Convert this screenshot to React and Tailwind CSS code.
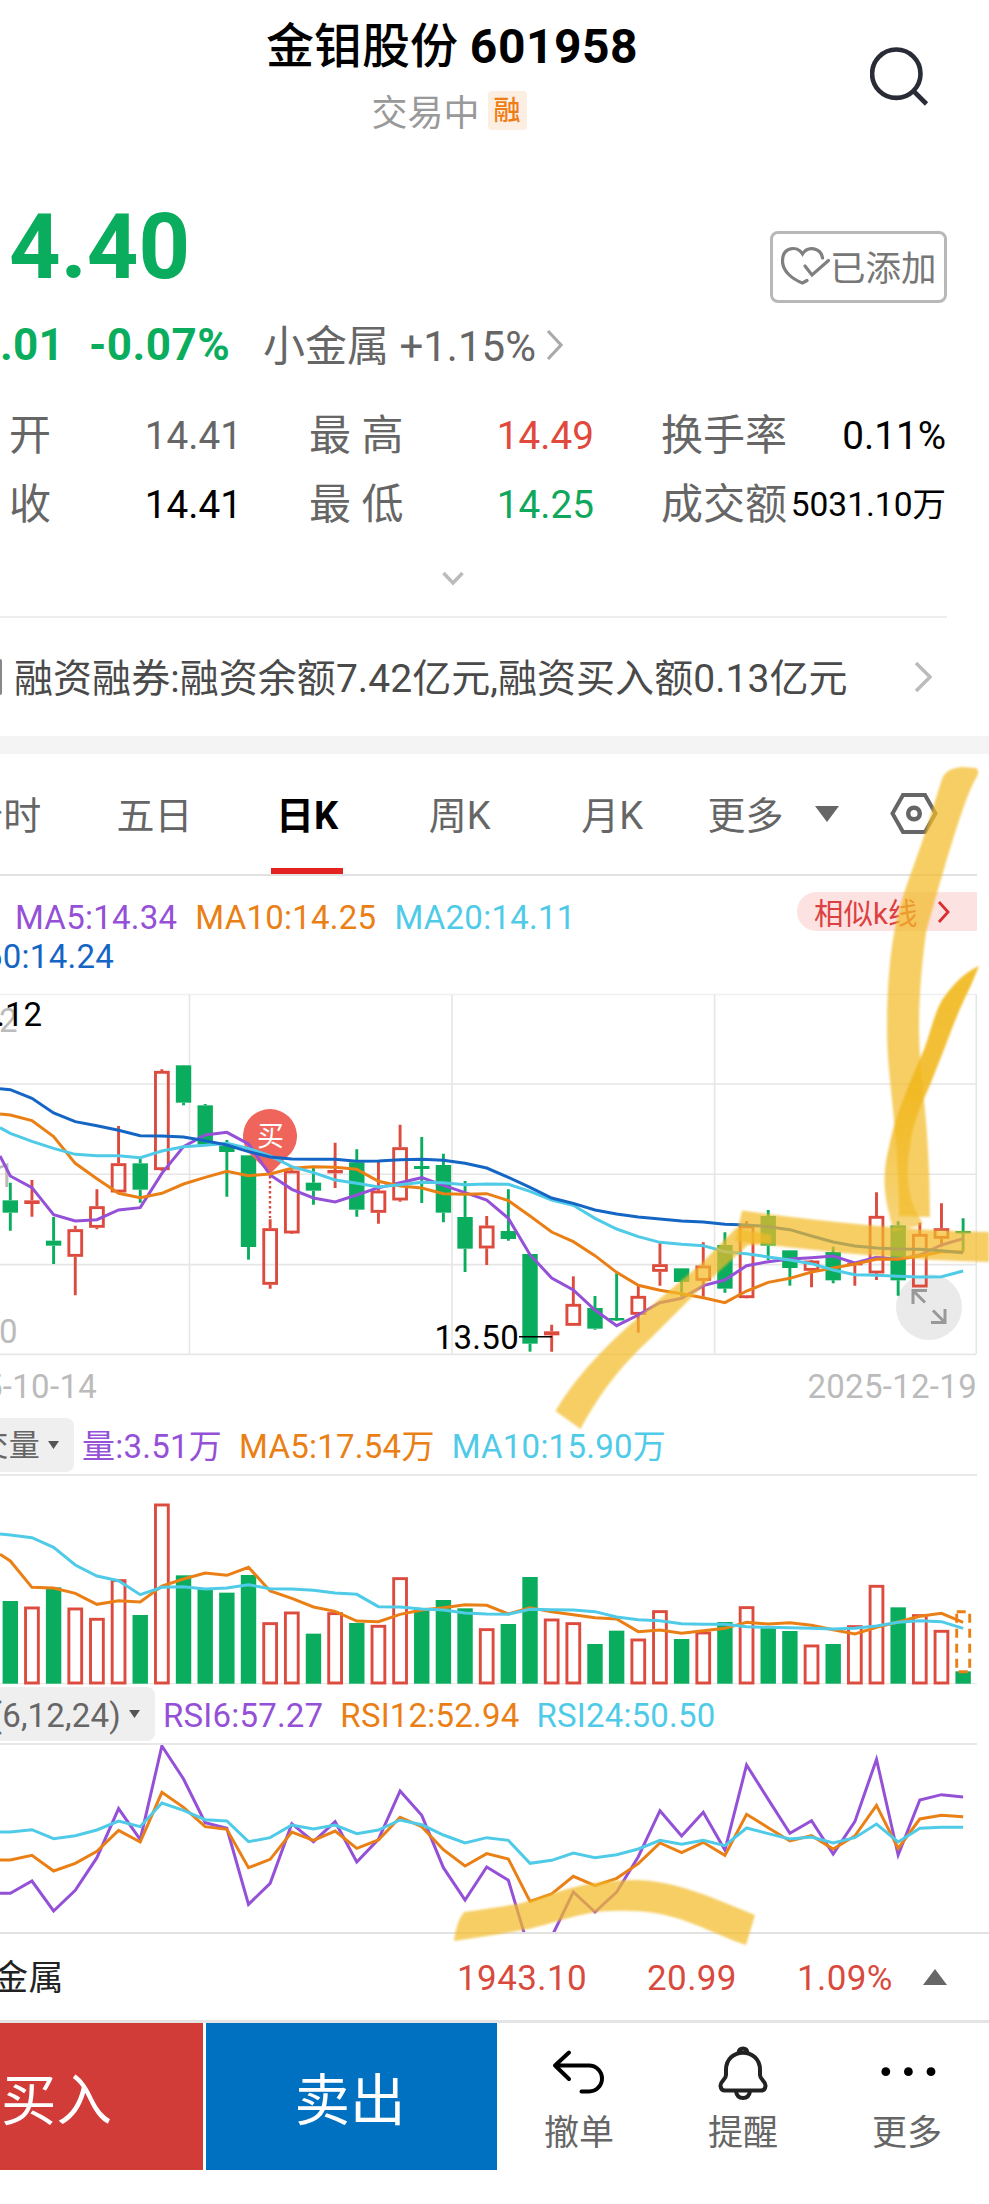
const RED = "#dd4b3e";
const GREEN = "#0aad5d";
const PURPLE = "#9550d8";
const ORANGE = "#ea8015";
const CYAN = "#4fcbe8";
const BLUE = "#1566c4";

// [up, high, bodyTop, bodyBottom, low], in thirds of a pixel below the chart origin
const candles = [
  [0, 608, 661, 698, 752], [1, 600, 661, 672, 710], [0, 711, 782, 797, 852],
  [1, 737, 748, 830, 946], [1, 628, 679, 743, 748], [1, 438, 550, 637, 640],
  [0, 535, 550, 629, 668], [1, 268, 273, 570, 572], [0, 255, 256, 368, 376],
  [0, 372, 376, 494, 494], [0, 480, 497, 516, 650], [0, 526, 526, 801, 839],
  [1, 718, 745, 914, 926], [1, 570, 572, 760, 762], [0, 562, 608, 632, 674],
  [1, 488, 570, 580, 624], [0, 508, 547, 689, 710], [1, 545, 632, 698, 731],
  [1, 434, 502, 661, 665], [0, 471, 558, 567, 669], [0, 521, 555, 698, 727],
  [0, 603, 711, 806, 876], [1, 708, 737, 805, 855], [0, 628, 753, 777, 782],
  [0, 822, 822, 1091, 1115], [1, 1034, 1054, 1066, 1115], [1, 889, 972, 1037, 1037],
  [0, 948, 984, 1046, 1049], [0, 880, 1014, 1020, 1022], [1, 918, 948, 1004, 1058],
  [1, 787, 853, 875, 917], [0, 865, 865, 906, 950], [1, 787, 857, 902, 950],
  [0, 757, 795, 926, 938], [1, 723, 737, 954, 955], [0, 690, 708, 797, 840],
  [0, 811, 811, 864, 917], [1, 840, 842, 872, 922], [0, 800, 816, 901, 910],
  [1, 850, 848, 856, 917], [1, 637, 708, 880, 900], [0, 724, 736, 901, 947],
  [1, 728, 762, 922, 922], [1, 670, 745, 776, 800], [0, 715, 753, 760, 815],
];

const volumes = [
  573, 590, 532, 593, 624, 508, 615, 281, 496, 537, 548, 495, 637, 605, 671,
  607, 639, 645, 502, 597, 570, 595, 655, 642, 501, 626, 637, 702, 662, 686,
  601, 687, 665, 636, 589, 650, 663, 704, 702, 646, 525, 592, 613, 660, 784,
];

// first value is where the line enters the left edge
const ma5 = [528, 588, 623, 704, 723, 719, 690, 683, 580, 500, 465, 457, 492, 585, 628, 654, 666, 645, 623, 608, 593, 616, 638, 660, 715, 824, 894, 930, 990, 1037, 1005, 968, 955, 917, 900, 857, 845, 837, 833, 828, 849, 832, 838, 825, 795, 776];
const ma10 = [402, 405, 422, 470, 550, 596, 640, 653, 640, 612, 592, 574, 587, 582, 565, 560, 562, 568, 604, 618, 624, 641, 643, 641, 662, 708, 756, 785, 827, 877, 916, 931, 941, 953, 968, 933, 907, 895, 876, 864, 852, 838, 838, 828, 815, 815];
const ma20 = [443, 460, 484, 505, 523, 527, 527, 533, 513, 500, 496, 490, 505, 528, 560, 578, 600, 610, 621, 614, 607, 608, 614, 612, 613, 634, 660, 676, 715, 747, 770, 787, 793, 797, 815, 821, 831, 840, 851, 870, 884, 886, 889, 891, 890, 873];
const ma60 = [326, 329, 355, 399, 425, 437, 451, 467, 468, 471, 482, 495, 515, 531, 537, 538, 538, 544, 543, 539, 538, 541, 550, 564, 592, 622, 654, 670, 690, 702, 711, 717, 723, 726, 733, 735, 740, 749, 768, 786, 798, 804, 807, 808, 812, 818];
const vol5 = [433, 453, 532, 534, 550, 583, 572, 576, 528, 507, 489, 496, 472, 543, 565, 591, 604, 633, 635, 613, 600, 593, 584, 586, 612, 593, 605, 614, 623, 627, 665, 660, 670, 662, 655, 637, 642, 638, 646, 659, 672, 652, 636, 619, 610, 637];
const vol10 = [372, 375, 383, 412, 465, 498, 512, 554, 532, 530, 537, 534, 524, 536, 537, 541, 549, 553, 590, 591, 597, 600, 609, 612, 613, 598, 599, 600, 605, 621, 629, 632, 641, 643, 643, 650, 652, 653, 655, 657, 655, 648, 637, 632, 635, 655];
const rsi6 = [520, 520, 483, 573, 511, 413, 266, 359, 78, 177, 308, 325, 553, 490, 311, 365, 305, 426, 358, 213, 286, 443, 540, 441, 481, 698, 650, 516, 576, 516, 410, 272, 348, 277, 390, 135, 238, 340, 302, 402, 305, 118, 405, 240, 224, 231];
const rsi12 = [420, 420, 406, 453, 430, 394, 331, 366, 217, 262, 320, 328, 443, 418, 336, 361, 333, 385, 360, 292, 320, 389, 438, 401, 417, 544, 522, 469, 497, 475, 431, 369, 398, 367, 406, 283, 323, 363, 347, 387, 348, 256, 385, 297, 286, 290];
const rsi24 = [336, 336, 329, 356, 347, 330, 303, 320, 249, 271, 299, 303, 365, 353, 315, 327, 315, 341, 330, 300, 314, 345, 369, 353, 361, 430, 421, 399, 413, 404, 387, 361, 373, 361, 377, 324, 341, 357, 351, 369, 353, 312, 366, 325, 322, 322];

const px = (i) => 10.3 + i * 21.655;

function Line({ data, base, color }) {
  const points = data
    .map((v, i) => `${i === 0 ? 0 : px(i - 1)},${base + v / 3}`)
    .join(" ");
  return <polyline points={points} fill="none" stroke={color} strokeWidth="3" />;
}

function Candle({ i, data }) {
  const [up, high, top, bottom, low] = data;
  const x = px(i);
  const y = (v) => 980 + v / 3;
  const hollow = up && bottom - top > 14;
  const color = up ? RED : GREEN;
  return (
    <g stroke={color} strokeWidth="2.9">
      <path d={`M${x} ${y(high)}V${y(top)}M${x} ${y(bottom)}V${y(low)}`} />
      {hollow ? (
        <rect x={x - 6.4} y={y(top) + 1.3} width="12.8" height={(bottom - top) / 3 - 2.6} fill="none" />
      ) : (
        <rect x={x - 7.7} y={y(top)} width="15.4" height={Math.max((bottom - top) / 3, 2.5)} fill={color} stroke="none" />
      )}
    </g>
  );
}

function PriceChart() {
  return (
    <svg className="block" width="989" height="380" viewBox="0 976 989 380">
      <g stroke="#e6e6e6" strokeWidth="1.6">
        <path d="M0 994.5H977" stroke="#f0f0f0" />
        <path d="M0 1084H976M0 1174.3H976M0 1264.6H976M0 1354.4H976" />
        <path d="M189.5 995V1354M452 995V1354M714.6 995V1354M976.3 995V1354" />
      </g>

      {/* expand button */}
      <circle cx="929" cy="1307" r="33" fill="#eaeaea" />
      <path
        d="M927 1290.5H913V1304M913.5 1291L925 1302.5M931 1322.5H945V1309M944.5 1322L933 1310.5"
        fill="none"
        stroke="#999"
        strokeWidth="3"
      />

      {candles.map((c, i) => (
        <Candle key={i} i={i} data={c} />
      ))}

      {/* buy marker */}
      <path d="M270 1176V1218" stroke={RED} strokeWidth="2.4" strokeDasharray="2.5 2.5" />
      <path d="M270 1174L249 1153A27 27 0 1 1 291 1153Z" fill="#ef655b" />
      <text x="270.5" y="1146" fontSize="27" fill="#fff" textAnchor="middle">买</text>

      <g fontSize="33" fill="#bbb" textAnchor="end">
        <text x="17.5" y="1031.5">2</text>
        <text x="15" y="1186.5">1</text>
        <text x="17.5" y="1342.5">0</text>
      </g>

      <Line data={ma5} base={980} color={PURPLE} />
      <Line data={ma10} base={980} color={ORANGE} />
      <Line data={ma20} base={980} color={CYAN} />
      <Line data={ma60} base={980} color={BLUE} />

      <g fontSize="33" textAnchor="end">
        <text x="42" y="1025.7">.12</text>
        <text x="519" y="1349" letterSpacing="0.3">13.50</text>
      </g>
      <path d="M519 1336.7H552" stroke="#000" strokeWidth="1.5" />
    </svg>
  );
}

function VolumeChart() {
  const floor = 1683.7;
  return (
    <svg className="block" width="989" height="209" viewBox="0 1476 989 209">
      <path d="M0 1683.7H977" stroke="#e6e6e6" />
      {volumes.map((v, i) => {
        const top = 1410 + v / 3;
        return candles[i][0] ? (
          <rect key={i} x={px(i) - 6.4} y={top + 1.3} width="12.8" height={floor - top - 2} fill="none" stroke={RED} strokeWidth="2.9" />
        ) : (
          <rect key={i} x={px(i) - 7.7} y={top} width="15.4" height={floor - top} fill={GREEN} />
        );
      })}
      <rect x="956.7" y="1611.7" width="13" height="60" fill="none" stroke={ORANGE} strokeWidth="2.9" strokeDasharray="9 6" />
      <Line data={vol5} base={1410} color={ORANGE} />
      <Line data={vol10} base={1410} color={CYAN} />
    </svg>
  );
}

function RsiChart() {
  return (
    <svg className="block" width="989" height="187" viewBox="0 1745 989 187">
      <Line data={rsi6} base={1720} color={PURPLE} />
      <Line data={rsi12} base={1720} color={ORANGE} />
      <Line data={rsi24} base={1720} color={CYAN} />
    </svg>
  );
}

// highlighter strokes drawn by hand over the charts
function Highlighter() {
  return (
    <svg className="pointer-events-none absolute left-0 top-[760px]" width="989" height="1200" viewBox="0 760 989 1200">
      <defs>
        <filter id="soft" x="-5%" y="-5%" width="110%" height="110%">
          <feGaussianBlur stdDeviation="1.2" />
        </filter>
        <linearGradient id="fade" x1="0" y1="0" x2="0" y2="1">
          <stop offset="0" stopColor="#f1b91c" stopOpacity="0.92" />
          <stop offset="0.45" stopColor="#f1b71c" stopOpacity="0.88" />
          <stop offset="0.75" stopColor="#f2bb2a" stopOpacity="0.75" />
          <stop offset="1" stopColor="#f2bb2a" stopOpacity="0.62" />
        </linearGradient>
      </defs>
      <g fill="#f2bb2a" fillOpacity="0.72" filter="url(#soft)">
        <path d="M942 779Q946 768 962 767L976 768Q981 771 975 780C962 803 938 890 926 933C921 970 919 1000 919 1030C920 1085 930 1120 930 1217L899 1216C899 1130 887 1080 887 1030C888 915 905 895 925 833Z" />
        <path
          fill="url(#fade)"
          fillOpacity="1"
          d="M979 966Q960 974 942 1000C935 1012 930 1033 925 1047L911 1080C902 1102 893 1125 889 1147C883 1170 883 1192 889 1213L893 1231L919 1226Q925 1224 919 1217C906 1196 906 1168 910 1147C913 1118 925 1098 932 1080L945 1047C951 1031 957 1015 964 1000Q972 984 979 966Z"
        />
        <path d="M555.5 1411C580 1370 612 1340 649 1308L702 1263L736 1228L771 1235V1244L748 1245L702 1287L649 1340C620 1367 600 1393 580.5 1429Z" />
        <path d="M742 1210.5C820 1221 900 1230 989 1232V1262C900 1260 820 1251 735 1241Z" />
        <path d="M464 1912Q493 1908 517 1904C550 1896 580 1880 631 1880C674 1879 715 1899 755 1915L746 1945C712 1934 678 1911 631 1911C580 1908 560 1924 517 1931C495 1935 475 1938 454 1941Q456 1922 464 1912Z" />
      </g>
    </svg>
  );
}

function Stat({ label, value, color = "text-black", small }) {
  return (
    <div className="flex h-[69px] items-center justify-between whitespace-pre pb-0.5">
      <span className="text-[42px] leading-[48px] text-[#666]">{label}</span>
      <span className={`${small ? "text-[33.5px]" : "text-[38.7px]"} leading-[48px] ${color}`}>{value}</span>
    </div>
  );
}

function Tab({ label, active }) {
  return (
    <div
      className={`relative flex w-[152.6px] shrink-0 items-center justify-center pt-1 text-[38px] ${
        active ? "font-bold text-black" : "text-[#666]"
      }`}
    >
      {label}
      {active && <div className="absolute bottom-0 h-1.5 w-[72px] bg-[#e2231f]" />}
    </div>
  );
}

function Chip({ label, className }) {
  return (
    <div className={`flex h-[54px] shrink-0 items-center justify-end overflow-hidden rounded-r-lg bg-[#efefef] text-[#666] ${className}`}>
      <span className="shrink-0 whitespace-nowrap pt-[3px]">{label}</span>
      <svg className="ml-2 shrink-0" width="11" height="8" viewBox="0 0 11 8">
        <path d="M0 0H11L5.5 8Z" fill="#555" />
      </svg>
    </div>
  );
}

function Action({ label, children }) {
  return (
    <div className="flex flex-1 flex-col items-center pt-[19px] text-[#666]">
      <svg width="64" height="64" viewBox="0 0 64 64" fill="none">
        {children}
      </svg>
      <span className="mt-2 text-[35px] leading-10">{label}</span>
    </div>
  );
}

export default function App() {
  return (
    <div className="relative h-[2204px] w-[989px] overflow-hidden bg-white font-[Roboto,'Noto_Sans_CJK_SC',sans-serif] text-black">
      {/* Header */}
      <header className="flex h-[202px] justify-between pt-5">
        <div className="w-[34px]" />
        <div className="flex flex-col items-center">
          <h1 className="text-[48px] font-medium leading-[54px]">
            金钼股份 <span className="font-bold tracking-[0.5px]">601958</span>
          </h1>
          <div className="mt-[17px] flex h-[39px] items-center gap-2 pr-1.5">
            <span className="pt-1.5 text-[36px] leading-9 text-[#999]">交易中</span>
            <span className="flex h-[39px] w-[39px] items-center justify-center rounded bg-[#fdeee2] pt-0.5 text-[27px] font-medium text-[#ee7d14]">
              融
            </span>
          </div>
        </div>
        <svg className="mr-[55px] mt-6" width="64" height="64" viewBox="0 0 64 64" fill="none" stroke="#292c36" strokeWidth="4.6">
          <circle cx="26.3" cy="29.7" r="24.2" />
          <path d="M43.5 47L56.5 60" />
        </svg>
      </header>

      {/* Price */}
      <div className="flex h-[119px] justify-between pl-[9px] pr-[42px]">
        <div className="text-[90px] font-bold leading-[92px] text-[#0aad5d]">4.40</div>
        <div className="mt-[29px] flex h-[72px] w-[177px] items-center rounded-lg border-[3px] border-[#b8b8b8] text-[#777]">
          <svg className="ml-2 shrink-0" width="50" height="42" viewBox="0 0 50 42" fill="none" stroke="#808080" strokeWidth="3.2" strokeLinecap="round">
            <path d="M41.5 12C40 2 27 -1 21.5 8C16 -1 1.5 1 1.5 15C1.5 25 11 33 21.5 37L26 34.5" />
            <path d="M24 20L31 29L47.5 14.5" />
          </svg>
          <span className="-ml-px whitespace-nowrap pt-1 text-[35.5px] leading-10">已添加</span>
        </div>
      </div>

      <div className="flex h-12 items-center whitespace-pre">
        <span className="w-[89px] text-[44px] font-bold tracking-[0.3px] text-[#0aad5d]">.01</span>
        <span className="w-[174px] text-[44px] font-bold tracking-[0.5px] text-[#0aad5d]">-0.07%</span>
        <span className="pt-0.5 text-[42px] text-[#666]">小金属 +1.15%</span>
        <svg className="ml-2.5" width="17" height="32" viewBox="0 0 17 32" fill="none" stroke="#aaa" strokeWidth="3.2">
          <path d="M2 2L15 16L2 30" />
        </svg>
      </div>

      <div className="grid grid-cols-[233px_285px_285px] gap-x-[67px] pl-[9px] pt-[33px]">
        <Stat label="开" value="14.41" color="text-[#666]" />
        <Stat label="最 高" value="14.49" color="text-[#e0493b]" />
        <Stat label="换手率" value="0.11%" />
        <Stat label="收" value="14.41" />
        <Stat label="最 低" value="14.25" color="text-[#0fa75c]" />
        <Stat label="成交额" value="5031.10万" small />
      </div>

      <div className="mr-[42px] flex h-[78px] justify-center border-b-2 border-[#eee] pr-[42px] pt-[31px]">
        <svg width="22" height="16" viewBox="0 0 22 16" fill="none" stroke="#bbb" strokeWidth="3.5">
          <path d="M1.5 2L11 12L20.5 2" />
        </svg>
      </div>

      <div className="flex h-[118px] items-center justify-between pr-[57px]">
        <div className="flex items-center">
          <div className="h-9 w-0.5 rounded-r bg-[#888]" />
          <span className="ml-3 whitespace-nowrap pt-1 text-[39px] tracking-[0.05px] text-[#4a4a4a]">
            融资融券:融资余额7.42亿元,融资买入额0.13亿元
          </span>
        </div>
        <svg width="18" height="32" viewBox="0 0 18 32" fill="none" stroke="#bbb" strokeWidth="3.4">
          <path d="M2 2L16 16L2 30" />
        </svg>
      </div>
      <div className="h-[18px] bg-[#f4f4f4]" />

      {/* Period tabs */}
      <div className="mr-3 flex h-[122px] border-b-2 border-[#e2e2e2]">
        <div className="-ml-[74.5px] flex">
          <Tab label={<span className="pl-[3px]">分时</span>} />
          <Tab label="五日" />
          <Tab label="日K" active />
          <Tab label="周K" />
          <Tab label="月K" />
        </div>
        <div className="ml-[19px] flex items-center">
          <span className="pt-1 text-[38px] text-[#666]">更多</span>
          <svg className="ml-8" width="24" height="16" viewBox="0 0 24 16">
            <path d="M0 0H24L12 16Z" fill="#666" />
          </svg>
          <svg className="ml-[51px]" width="48" height="42" viewBox="0 0 48 42" fill="none" stroke="#666">
            <path d="M13 2H35L45.5 20.5L35 39H13L2.5 20.5Z" strokeWidth="4" />
            <circle cx="24" cy="20.5" r="5.8" strokeWidth="4.5" />
          </svg>
        </div>
      </div>

      {/* Moving averages */}
      <div className="flex h-[100px] justify-between pr-3 pt-4">
        <div className="pt-1.5 text-[33px] leading-[39px] tracking-[0.25px]">
          <div className="flex gap-[18px] pl-[15px]">
            <span className="text-[#9550d8]">MA5:14.34</span>
            <span className="text-[#ea8015]">MA10:14.25</span>
            <span className="text-[#4fcbe8]">MA20:14.11</span>
          </div>
          <div className="-ml-[16px] text-[#1566c4]">60:14.24</div>
        </div>
        <div className="flex h-[39px] w-[180px] items-center rounded-l-full bg-[#fde2e2] pl-[17px] text-[29.5px] text-[#dc4040]">
          <span className="pt-1.5">相似k线</span>
          <svg className="ml-5" width="14" height="24" viewBox="0 0 14 24" fill="none" stroke="#dc3030" strokeWidth="2.8">
            <path d="M2 2L11 12L2 22" />
          </svg>
        </div>
      </div>

      <PriceChart />
      <div className="-ml-[16px] mr-3 flex h-[60px] items-center justify-between pt-0.5 text-[33px] tracking-[0.3px] text-[#bbb]">
        <span>5-10-14</span>
        <span>2025-12-19</span>
      </div>

      {/* Volume */}
      <div className="mr-3 flex h-[60px] items-center gap-[18px] border-b-2 border-[#e8e8e8] text-[33px] tracking-[0.25px]">
        <Chip label="交量" className="w-[74px] pr-[15px] text-[31px]" />
        <span className="-ml-[10px] pt-[3px] text-[#9550d8]">量:3.51万</span>
        <span className="-ml-px pt-[3px] text-[#ea8015]">MA5:17.54万</span>
        <span className="-ml-px pt-[3px] text-[#4fcbe8]">MA10:15.90万</span>
      </div>
      <VolumeChart />

      {/* RSI */}
      <div className="mr-3 flex h-[60px] items-center gap-[18px] border-b-2 border-[#e8e8e8] text-[33px] tracking-[0.2px]">
        <Chip label="(6,12,24)" className="w-[155px] pr-[15px]" />
        <span className="-ml-[10px] pt-[3px] text-[#9550d8]">RSI6:57.27</span>
        <span className="-ml-px pt-[3px] text-[#ea8015]">RSI12:52.94</span>
        <span className="-ml-px pt-[3px] text-[#4fcbe8]">RSI24:50.50</span>
      </div>
      <RsiChart />

      {/* Sector index */}
      <div className="flex h-[88px] items-center border-t-2 border-[#e2e2e2] pt-[5px] text-[35px] tracking-[0.4px] text-[#d94a3e]">
        <span className="-ml-[7px] w-[464px] text-[#222]">金属</span>
        <span className="w-[190px]">1943.10</span>
        <span className="w-[150px]">20.99</span>
        <span className="w-[126px]">1.09%</span>
        <svg className="mb-1.5" width="24" height="16" viewBox="0 0 24 16">
          <path d="M12 0L24 16H0Z" fill="#666" />
        </svg>
      </div>

      {/* Bottom bar */}
      <div className="flex h-[150px] border-t-[3px] border-[#e4e4e4]">
        <button className="w-[203px] shrink-0 bg-[#d23c38] pr-[91px] pt-2.5 text-right text-[55.5px] text-white">
          买入
        </button>
        <button className="ml-[3px] w-[291px] shrink-0 bg-[#0070c0] pr-[3px] pt-2.5 text-[55.5px] text-white">卖出</button>
        <Action label="撤单">
          <path
            d="M22 10.5L8 23.5L22 37M8 23.5H42A13 13 0 0 1 42 49.5H34.5"
            stroke="#000"
            strokeWidth="4"
            strokeLinecap="round"
            strokeLinejoin="round"
          />
        </Action>
        <Action label="提醒">
          <g stroke="#222" strokeWidth="4" strokeLinejoin="round">
            <path d="M15 28C15 5 49 5 49 28V33C49 38 55 39 54.5 44Q54 48.5 50 48.5H14Q10 48.5 9.5 44C9 39 15 38 15 33Z" />
            <path d="M27.5 11Q28 6.5 32 6.5Q36 6.5 36.5 11M25 49.5Q26 56 32 56Q38 56 39 49.5" />
          </g>
        </Action>
        <Action label="更多">
          <g fill="#000">
            <circle cx="10.8" cy="29.7" r="4.4" />
            <circle cx="33.4" cy="29.7" r="4.4" />
            <circle cx="56" cy="29.7" r="4.4" />
          </g>
        </Action>
      </div>

      <Highlighter />
    </div>
  );
}
